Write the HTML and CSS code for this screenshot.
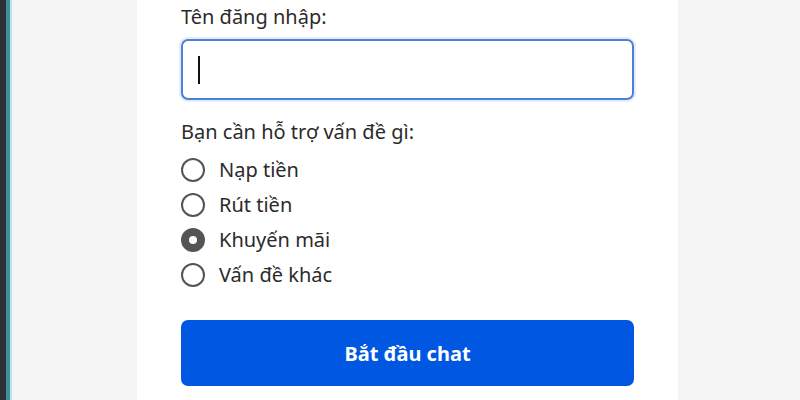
FILE: index.html
```html
<!DOCTYPE html>
<html lang="vi">
<head>
<meta charset="utf-8">
<link rel="stylesheet" href="styles.css">
</head>
<body>
<div class="page">
  <div class="edge">
    <div class="edge-dark"></div>
    <div class="edge-teal"></div>
    <div class="edge-light"></div>
  </div>
  <div class="side"></div>
  <main class="panel">
    <label class="label">Tên đăng nhập:</label>
    <div class="input"><span class="caret"></span></div>
    <div class="label q">Bạn cần hỗ trợ vấn đề gì:</div>
    <ul class="options">
      <li class="opt"><span class="radio"></span>Nạp tiền</li>
      <li class="opt"><span class="radio"></span>Rút tiền</li>
      <li class="opt"><span class="radio checked"></span>Khuyến mãi</li>
      <li class="opt"><span class="radio"></span>Vấn đề khác</li>
    </ul>
    <button class="btn">Bắt đầu chat</button>
  </main>
  <div class="side grow"></div>
</div>
</body>
</html>
```
FILE: styles.css
```css
html, body {
  margin: 0;
  padding: 0;
  height: 100%;
  overflow: hidden;
}
body {
  font-family: "Noto Sans", "Open Sans", sans-serif;
  color: #2b2b2b;
  background: #f5f5f5;
}
.page {
  display: flex;
  height: 400px;
}
.edge {
  display: flex;
}
.edge-dark { width: 6px; background: #2d3133; }
.edge-teal { width: 4px; background: #3f8f9c; }
.edge-light { width: 2px; background: #bfe3ea; }
.side {
  width: 125px;
  background: #f5f5f5;
}
.side.grow { flex: 1; }
.panel {
  width: 453px;
  padding: 4px 44px 0;
  background: #fff;
  display: flex;
  flex-direction: column;
}
.label {
  font-size: 20px;
  line-height: 26px;
  display: block;
}
.input {
  margin-top: 9px;
  height: 57px;
  border: 2px solid #4d7fd4;
  border-radius: 7px;
  box-shadow: 0 0 0 2px #e3edfb;
  display: flex;
  align-items: center;
  padding-left: 15px;
}
.caret {
  width: 2px;
  height: 28px;
  background: #111;
}
.q {
  margin-top: 19px;
}
.options {
  list-style: none;
  margin: 7px 0 0;
  padding: 0;
}
.opt {
  display: flex;
  align-items: center;
  height: 35px;
  font-size: 20px;
}
.radio {
  box-sizing: border-box;
  width: 24px;
  height: 24px;
  border: 2px solid #555;
  border-radius: 50%;
  background: #fff;
  margin-right: 14px;
}
.radio.checked {
  border: 8px solid #555;
}
.btn {
  margin-top: 28px;
  height: 66px;
  border: none;
  border-radius: 7px;
  background: #0057e1;
  color: #fff;
  font-family: "Noto Sans", "Open Sans", sans-serif;
  font-weight: 700;
  font-size: 20px;
}
```
